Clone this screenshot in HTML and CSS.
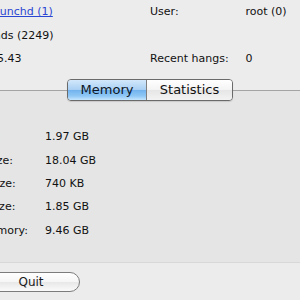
FILE: index.html
```html
<!DOCTYPE html>
<html lang="en">
<head>
  <meta charset="utf-8" />
  <title>Process Inspector</title>
  <link rel="stylesheet" href="styles.css">
</head>
<body>
  <div class="inspector">
    <!-- Process summary -->
    <div class="summary">
      <span class="label">Parent Process:</span>
      <span class="value"><a href="#" class="link">launchd (1)</a></span>
      <span class="label">User:</span>
      <span class="value">root (0)</span>

      <span class="label">Process Group:</span>
      <span class="value">mds (2249)</span>
      <span class="label"></span>
      <span class="value"></span>

      <span class="label">% CPU:</span>
      <span class="value">15.43</span>
      <span class="label">Recent hangs:</span>
      <span class="value">0</span>
    </div>

    <!-- Tabs -->
    <div class="tab-bar">
      <div class="segmented">
        <div class="segment selected">Memory</div>
        <div class="segment">Statistics</div>
      </div>
    </div>

    <div class="panel">
      <div class="memory">
        <span class="label">Real Memory Size:</span>
        <span class="value">1.97 GB</span>
        <span class="label">Virtual Memory Size:</span>
        <span class="value">18.04 GB</span>
        <span class="label">Shared Memory Size:</span>
        <span class="value">740 KB</span>
        <span class="label">Private Memory Size:</span>
        <span class="value">1.85 GB</span>
        <span class="label">Virtual Private Memory:</span>
        <span class="value">9.46 GB</span>
      </div>
    </div>

    <div class="footer">
      <button class="quit">Quit</button>
    </div>
  </div>
</body>
</html>
```

FILE: styles.css
```css
body {
  margin: 0;
  background-color: #ececec;
  font-family: "DejaVu Sans", sans-serif;
  font-size: 11px;
  color: #111;
  overflow: hidden;
}

.inspector {
  width: 300px;
  height: 300px;
  overflow: hidden;
}

.label,
.value {
  white-space: nowrap;
}

.summary {
  display: grid;
  grid-template-columns: 100px 160px 95.5px 1fr;
  grid-auto-rows: 23.7px;
  line-height: 23.7px;
  margin-left: -110px;
}

.link {
  color: #2a46d2;
  text-decoration: underline;
}

.tab-bar {
  display: flex;
  justify-content: center;
  margin-top: 7.9px;
  position: relative;
  z-index: 1;
}

.segmented {
  display: flex;
  height: 20px;
  border: 1px solid #6a6a6a;
  border-radius: 4px;
  overflow: hidden;
  box-shadow: 0 1px 1px rgba(0, 0, 0, 0.12);
}

.segment {
  font-size: 13px;
  line-height: 20px;
  text-align: center;
  color: #111;
  background: linear-gradient(to bottom, #ffffff 0%, #f4f4f4 48%, #e6e6e6 52%, #f3f3f3 100%);
}

.segment:first-child {
  width: 78px;
  border-right: 1px solid #7e7e7e;
}

.segment:last-child {
  width: 85px;
}

.segment.selected {
  color: #0d1626;
  background: linear-gradient(to bottom, #d3e8fb 0%, #a9d0f4 48%, #72b3ee 52%, #8fc8f6 80%, #c6e6fd 100%);
}

.panel {
  margin-top: -11px;
  background-color: #e5e5e5;
  border-top: 1px solid #a4a4a4;
  border-bottom: 1px solid #d8d8d8;
  padding: 34.5px 0 20px;
}

.memory {
  display: grid;
  grid-template-columns: 146px 1fr;
  grid-auto-rows: 23.3px;
  line-height: 23.3px;
  margin-left: -101px;
}

.footer {
  padding-top: 9px;
}

.quit {
  display: block;
  margin-left: -18px;
  width: 98px;
  height: 20px;
  padding: 0;
  border: 1px solid #7c7c7c;
  border-radius: 10px;
  background: linear-gradient(to bottom, #ffffff 0%, #f6f6f6 48%, #e8e8e8 52%, #fafafa 100%);
  font-family: "DejaVu Sans", sans-serif;
  font-size: 12px;
  line-height: 18px;
  color: #1a1a1a;
}
```
